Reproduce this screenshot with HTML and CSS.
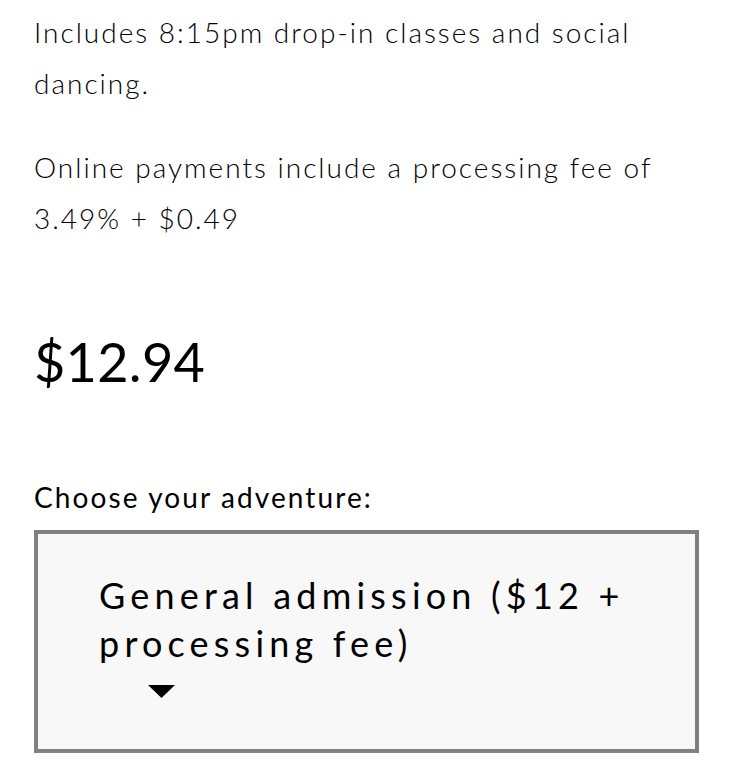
FILE: index.html
```html
<!DOCTYPE html>
<html lang="en">
<head>
<meta charset="utf-8">
<title>Ticket</title>
<link rel="stylesheet" href="styles.css">
</head>
<body>
<main class="product">
  <div class="description">
    <p class="desc-line">Includes 8:15pm drop-in classes and social dancing.</p>
    <p class="desc-line">Online payments include a processing fee of 3.49% + $0.49</p>
  </div>
  <div class="price">$12.94</div>
  <label class="field-label" for="adventure">Choose your adventure:</label>
  <div class="select-box" id="adventure" role="combobox" aria-expanded="false">
    <div class="select-value">General admission ($12 + processing fee)</div>
    <svg class="select-arrow" width="27" height="13" viewBox="0 0 27 13" aria-hidden="true"><polygon points="0,0 27,0 13.5,13" fill="#000"/></svg>
  </div>
</main>
</body>
</html>
```
FILE: styles.css
```css
html, body {
  margin: 0;
  padding: 0;
  background: #ffffff;
}

body {
  font-family: "Lato", "Open Sans", sans-serif;
  color: #000;
}

.product {
  padding: 7px 20px 0 34px;
  display: flex;
  flex-direction: column;
  align-items: flex-start;
}

.description {
  display: flex;
  flex-direction: column;
  gap: 33px;
}

.desc-line {
  margin: 0;
  font-size: 28px;
  line-height: 51px;
  font-weight: 300;
  letter-spacing: 2px;
  color: #000;
}

.price {
  margin-top: 85px;
  font-size: 54px;
  line-height: 65px;
  font-weight: 400;
  letter-spacing: 0.3px;
}

.field-label {
  margin-top: 86px;
  font-size: 28px;
  line-height: 34px;
  font-weight: 400;
  letter-spacing: 2.1px;
}

.select-box {
  box-sizing: border-box;
  margin-top: 16px;
  width: 665px;
  height: 223px;
  border: 4px solid #808080;
  background: #f8f8f8;
  padding: 37px 20px 0 61px;
}

.select-value {
  width: 575px;
  font-size: 36px;
  line-height: 48px;
  font-weight: 400;
  letter-spacing: 5.2px;
}

.select-arrow {
  display: block;
  margin: 18px 0 0 49px;
}
```
